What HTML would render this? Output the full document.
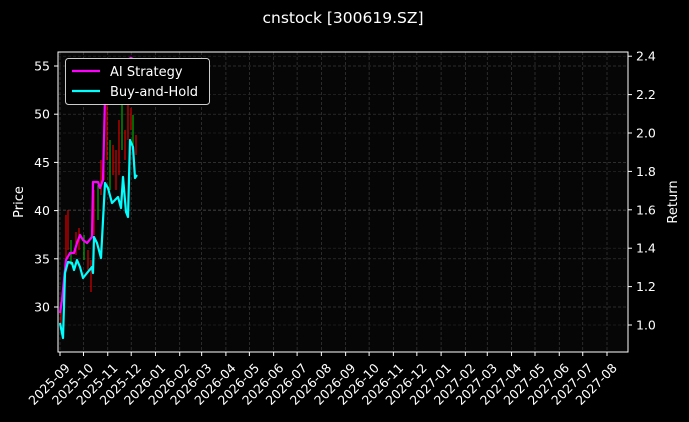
<!DOCTYPE html>
<html><head><meta charset="utf-8"><style>
html,body{margin:0;padding:0;background:#000;width:689px;height:422px;overflow:hidden}
svg{display:block;font-family:"DejaVu Sans","Liberation Sans",sans-serif}
</style></head><body>
<svg id="s" width="689" height="422" xmlns="http://www.w3.org/2000/svg">
<rect width="689" height="422" fill="#000"/>
<rect x="58" y="52" width="570" height="300" fill="#060606"/>
<g id="grid"></g>
<g id="candles"></g>
<polyline fill="none" stroke="#ff00ff" stroke-width="2.2" stroke-linejoin="round" points="60,313 62,300 66,260 70,253 74,253 77,243 80,235 83,240 87,243 92,237 93,182 98,182 100,188 103,180 105,97 108,90 112,80 117,73 122,63 127,60 131,58 135,60"/>
<polyline fill="none" stroke="#00ffff" stroke-width="2.2" stroke-linejoin="round" points="60,323 63,338 65,273 68,262 72,263 74,270 77,260 80,267 83,278 87,273 92,267 93,273 94,237 97,243 101,258 105,183 108,188 112,203 115,200 118,197 121,208 123,177 126,212 128,217 130,140 133,147 135,178 137,175"/>
<rect x="58" y="52" width="570" height="300" fill="none" stroke="#fff" stroke-width="1"/>
<g id="ticks" fill="#fff" font-size="12.5"></g>
<rect x="65.5" y="58.5" width="144" height="46" rx="3" fill="#000" stroke="#ccc" stroke-width="1"/>
<line x1="72" y1="71" x2="100" y2="71" stroke="#ff00ff" stroke-width="2.2"/>
<line x1="72" y1="91" x2="100" y2="91" stroke="#00ffff" stroke-width="2.2"/>
<text x="110" y="76" fill="#fff" font-size="13">AI Strategy</text>
<text x="110" y="96" fill="#fff" font-size="13">Buy-and-Hold</text>
<text x="343" y="23" fill="#fff" font-size="15.5" text-anchor="middle">cnstock [300619.SZ]</text>
<text transform="translate(23,202) rotate(-90)" fill="#fff" font-size="13" text-anchor="middle">Price</text>
<text transform="translate(677,202) rotate(-90)" fill="#fff" font-size="13" text-anchor="middle">Return</text>
</svg>
<script>
var NS="http://www.w3.org/2000/svg";
function el(p,t,a,txt){var e=document.createElementNS(NS,t);for(var k in a)e.setAttribute(k,a[k]);if(txt)e.textContent=txt;document.getElementById(p).appendChild(e);}
var lens=[30,31,30,31,31,28,31,30,31,30,31,31,30,31,30,31,31,28,31,30,31,30,31,31];
var names=[];var y=2025,m=9;for(var i=0;i<24;i++){names.push(y+"-"+(m<10?"0":"")+m);m++;if(m>12){m=1;y++;}}
var d=0,sc=547/699;
for(var i=0;i<24;i++){var x=60+d*sc;
el("grid","line",{x1:x,y1:52,x2:x,y2:352,stroke:"#3a3a3a","stroke-width":0.7,"stroke-dasharray":"3,2"});
el("ticks","line",{x1:x,y1:352,x2:x,y2:356,stroke:"#fff"});
el("ticks","text",{transform:"translate("+(x+4)+",362) rotate(-45)","text-anchor":"end","dominant-baseline":"hanging"},names[i]);
d+=lens[i];}
for(var v=30;v<=55;v+=5){var yy=307-(v-30)*48.2/5;
el("grid","line",{x1:58,y1:yy,x2:628,y2:yy,stroke:"#3a3a3a","stroke-width":0.7,"stroke-dasharray":"3,2"});
el("ticks","line",{x1:54,y1:yy,x2:58,y2:yy,stroke:"#fff"});
el("ticks","text",{x:50,y:yy+4.5,"text-anchor":"end"},""+v);}
for(var i=0;i<8;i++){var v=1+i*0.2;var yy=325-i*38.4;
el("grid","line",{x1:58,y1:yy,x2:628,y2:yy,stroke:"#2c2c2c","stroke-width":0.6,"stroke-dasharray":"3,2"});
el("ticks","line",{x1:628,y1:yy,x2:632,y2:yy,stroke:"#fff"});
el("ticks","text",{x:636,y:yy+4.5},v.toFixed(1));}
var c=[[61,305,325,"#d00"],[64,280,300,"#0a0"],[66,215,265,"#d00"],[68,210,250,"#d00"],[71,240,265,"#0a0"],[76,232,255,"#d00"],[79,228,250,"#d00"],[84,235,260,"#0a0"],[88,250,270,"#d00"],[91,260,292,"#d00"],[94,190,235,"#d00"],[98,185,220,"#0a0"],[101,160,195,"#d00"],[104,120,180,"#d00"],[107,100,160,"#d00"],[110,140,190,"#0a0"],[113,145,175,"#d00"],[116,150,190,"#d00"],[119,120,175,"#d00"],[122,100,150,"#0a0"],[125,130,160,"#d00"],[128,95,140,"#d00"],[131,108,130,"#d00"],[133,115,150,"#0a0"],[136,135,155,"#d00"]];
c.forEach(function(a){el("candles","line",{x1:a[0],y1:a[1],x2:a[0],y2:a[2],stroke:a[3],"stroke-width":1.2});});
</script>
</body></html>
